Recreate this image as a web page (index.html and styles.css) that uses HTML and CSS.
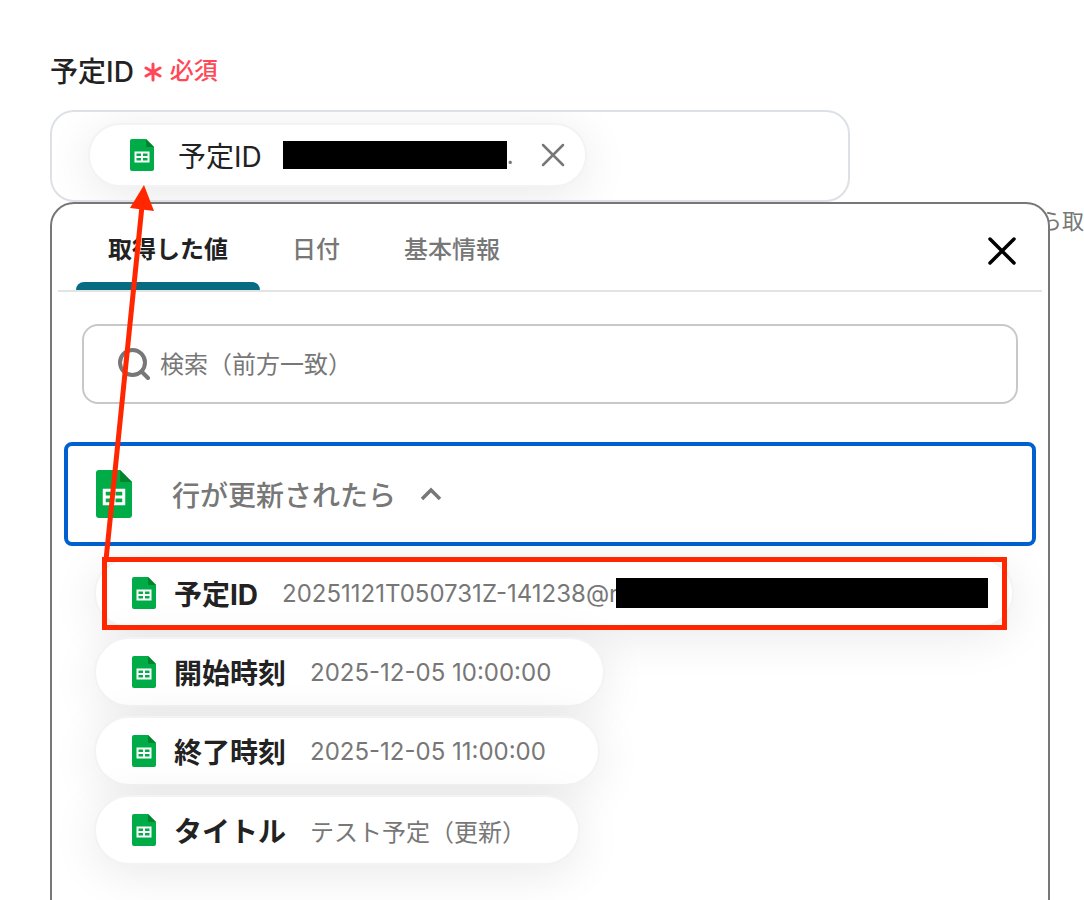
FILE: index.html
```html
<!DOCTYPE html>
<html lang="ja">
<head>
<meta charset="utf-8">
<title>予定ID</title>
<link rel="stylesheet" href="styles.css">
</head>
<body>
<svg class="defs" width="0" height="0">
  <symbol id="sheet" viewBox="0 0 24 32">
    <path d="M2 0h14l8 8v22a2 2 0 0 1-2 2H2a2 2 0 0 1-2-2V2a2 2 0 0 1 2-2z" fill="#00ac47"/>
    <path d="M16 0l8 8h-7a1 1 0 0 1-1-1z" fill="#00832d"/>
    <path d="M4.500 12.500h15v11h-15zM6.500 14.500v2.500h4.500v-2.500zM13 14.500v2.500h4.500v-2.500zM6.500 19v2.500h4.500v-2.500zM13 19v2.500h4.500v-2.500z" fill="#fff" fill-rule="evenodd"/>
  </symbol>
</svg>
<main class="page">
  <div class="label">
    <span>予定ID</span>
    <span class="required">
      <svg class="asterisk" width="18" height="20" viewBox="0 0 18 20"><path d="M9 2v16M2 6l14 8M16 6L2 14" stroke="currentColor" stroke-width="3" stroke-linecap="round"/></svg>
      必須
    </span>
  </div>
  <div class="field">
    <div class="chip selected">
      <svg class="icon"><use href="#sheet"/></svg>
      <span class="name">予定ID</span>
      <span class="value"><span class="mask"></span>.</span>
      <button class="remove" type="button" aria-label="削除">
        <svg width="24" height="24" viewBox="0 0 24 24"><path d="M2 2l20 20M22 2L2 22" stroke="currentColor" stroke-width="2.500" stroke-linecap="round"/></svg>
      </button>
    </div>
  </div>
  <div class="below">
    <p class="help">ら取</p>
    <section class="picker">
      <div class="tabs" role="tablist">
        <button class="tab active" type="button" role="tab" aria-selected="true">取得した値</button>
        <button class="tab" type="button" role="tab">日付</button>
        <button class="tab" type="button" role="tab">基本情報</button>
        <button class="close" type="button" aria-label="閉じる">
          <svg width="28" height="28" viewBox="0 0 28 28"><path d="M2 2l24 24M26 2L2 26" stroke="currentColor" stroke-width="3.500" stroke-linecap="round"/></svg>
        </button>
      </div>
      <label class="search">
        <svg width="32" height="32" viewBox="0 0 32 32" fill="none" stroke="currentColor" stroke-width="4" stroke-linecap="round"><circle cx="14.500" cy="14.500" r="12.500"/><path d="M23.500 23.500l6.500 6.500"/></svg>
        <input type="text" placeholder="検索（前方一致）" aria-label="検索">
      </label>
      <button class="group" type="button" aria-expanded="true">
        <svg class="icon-big"><use href="#sheet"/></svg>
        <span>行が更新されたら</span>
        <svg class="chevron" width="22" height="14" viewBox="0 0 22 14"><path d="M2 12l9-9 9 9" fill="none" stroke="currentColor" stroke-width="3.500"/></svg>
      </button>
      <div class="items">
        <button class="chip masked" type="button">
          <svg class="icon"><use href="#sheet"/></svg>
          <span class="name">予定ID</span>
          <span class="value">20251121T050731Z-141238@r<span class="mask"></span></span>
        </button>
        <button class="chip" type="button">
          <svg class="icon"><use href="#sheet"/></svg>
          <span class="name">開始時刻</span>
          <span class="value">2025-12-05 10:00:00</span>
        </button>
        <button class="chip" type="button">
          <svg class="icon"><use href="#sheet"/></svg>
          <span class="name">終了時刻</span>
          <span class="value">2025-12-05 11:00:00</span>
        </button>
        <button class="chip" type="button">
          <svg class="icon"><use href="#sheet"/></svg>
          <span class="name">タイトル</span>
          <span class="value">テスト予定（更新）</span>
        </button>
      </div>
    </section>
  </div>
  <!-- arrow and frame: which value goes into the field -->
  <svg class="marker" width="1084" height="900" viewBox="0 0 1084 900">
    <path d="M106 560L142 206" stroke="#ff2600" stroke-width="5"/>
    <path d="M144 185l10 26-24-3z" fill="#ff2600"/>
    <rect x="104.500" y="559.500" width="900" height="68" fill="none" stroke="#ff2600" stroke-width="5"/>
  </svg>
</main>
</body>
</html>
```

FILE: styles.css
```css
* {
  box-sizing: border-box;
}
body {
  margin: 0;
  background: #fff;
  color: #222;
  font-family: Inter, "Noto Sans CJK JP", sans-serif;
  font-size: 24px;
}
button, input {
  font: inherit;
  color: inherit;
  background: none;
  border: 0;
  padding: 0;
}
svg {
  display: block;
  flex: none;
}
.defs {
  position: absolute;
}
.page {
  position: relative;
  height: 100vh;
  padding: 50px 34px 0 50px;
  overflow: hidden;
}
.label {
  display: flex;
  align-items: center;
  gap: 10px;
  height: 40px;
  margin-bottom: 20px;
  font-size: 28px;
  font-weight: 500;
}
.required {
  display: flex;
  align-items: center;
  gap: 8px;
  padding-bottom: 4px;
  font-size: 24px;
  color: #ff4757;
}
.asterisk {
  margin-top: 8px;
}
.field {
  width: 80%;
  height: 92px;
  padding: 11px 36px;
  border: 2px solid #dde0e5;
  border-radius: 24px;
  overflow: hidden;
}
.chip {
  display: flex;
  align-items: center;
  height: 70px;
  padding: 0 52px 0 36px;
  border: 2px solid #f3f3f3;
  border-radius: 35px;
  background: #fff;
  box-shadow: 0 8px 48px rgba(0, 0, 0, 0.09);
  white-space: nowrap;
}
.icon {
  width: 24px;
  height: 32px;
  margin-right: 18px;
}
.name {
  margin-right: 24px;
  font-size: 28px;
  font-weight: 700;
}
.value {
  display: flex;
  align-items: center;
  color: #777;
}
.mask {
  height: 30px;
  background: #000;
}
.selected {
  width: fit-content;
  height: 64px;
  padding: 0 20px 0 40px;
}
.selected .icon {
  margin-right: 24px;
}
.selected .name {
  margin-right: 21px;
  font-weight: 400;
}
.selected .mask {
  width: 224px;
  height: 28px;
}
.remove {
  margin-left: 27px;
  color: #777;
}
.below {
  position: relative;
}
.help {
  margin: 0 -34px 0 0;
  padding-top: 3px;
  font-size: 22px;
  line-height: 32px;
  text-align: right;
  color: #777;
}
.picker {
  position: absolute;
  top: 0;
  left: 0;
  width: 100%;
  min-height: 100vh;
  border: 2px solid #777;
  border-radius: 24px;
  background: #fff;
}
.tabs {
  display: flex;
  height: 88px;
  margin: 0 6px 32px;
  padding: 0 26px 0 18px;
  border-bottom: 2px solid #e3e3e3;
}
.tab {
  padding: 0 32px;
  border-top: 8px solid transparent;
  border-bottom: 8px solid transparent;
  font-weight: 500;
  color: #777;
}
.active {
  position: relative;
  font-weight: 700;
  color: #222;
}
.active::after {
  content: "";
  position: absolute;
  left: 0;
  right: 0;
  bottom: -8px;
  height: 8px;
  border-radius: 8px 8px 0 0;
  background: #076b82;
}
.close {
  margin: 8px 0 0 auto;
  color: #000;
}
.search {
  display: flex;
  align-items: center;
  gap: 10px;
  height: 80px;
  margin: 0 30px 38px;
  padding: 0 34px;
  border: 2px solid #c8c8c8;
  border-radius: 16px;
  color: #777;
}
.search input {
  flex: 1;
  outline: 0;
}
.search input::placeholder {
  color: #777;
}
.group {
  display: flex;
  align-items: center;
  width: calc(100% - 24px);
  height: 104px;
  margin: 0 12px 12px;
  padding: 0 28px;
  border: 4px solid #0060d0;
  border-radius: 8px;
  font-size: 28px;
  font-weight: 500;
  color: #777;
}
.icon-big {
  width: 36px;
  height: 50px;
  margin-right: 40px;
}
.chevron {
  margin-left: 24px;
}
.items {
  display: flex;
  flex-direction: column;
  align-items: flex-start;
  gap: 9px;
  padding: 0 36px 0 42px;
}
.masked {
  padding-right: 24px;
}
.masked .mask {
  width: 372px;
  margin-left: -2px;
}
.marker {
  position: absolute;
  top: 0;
  left: 0;
  pointer-events: none;
}
```
